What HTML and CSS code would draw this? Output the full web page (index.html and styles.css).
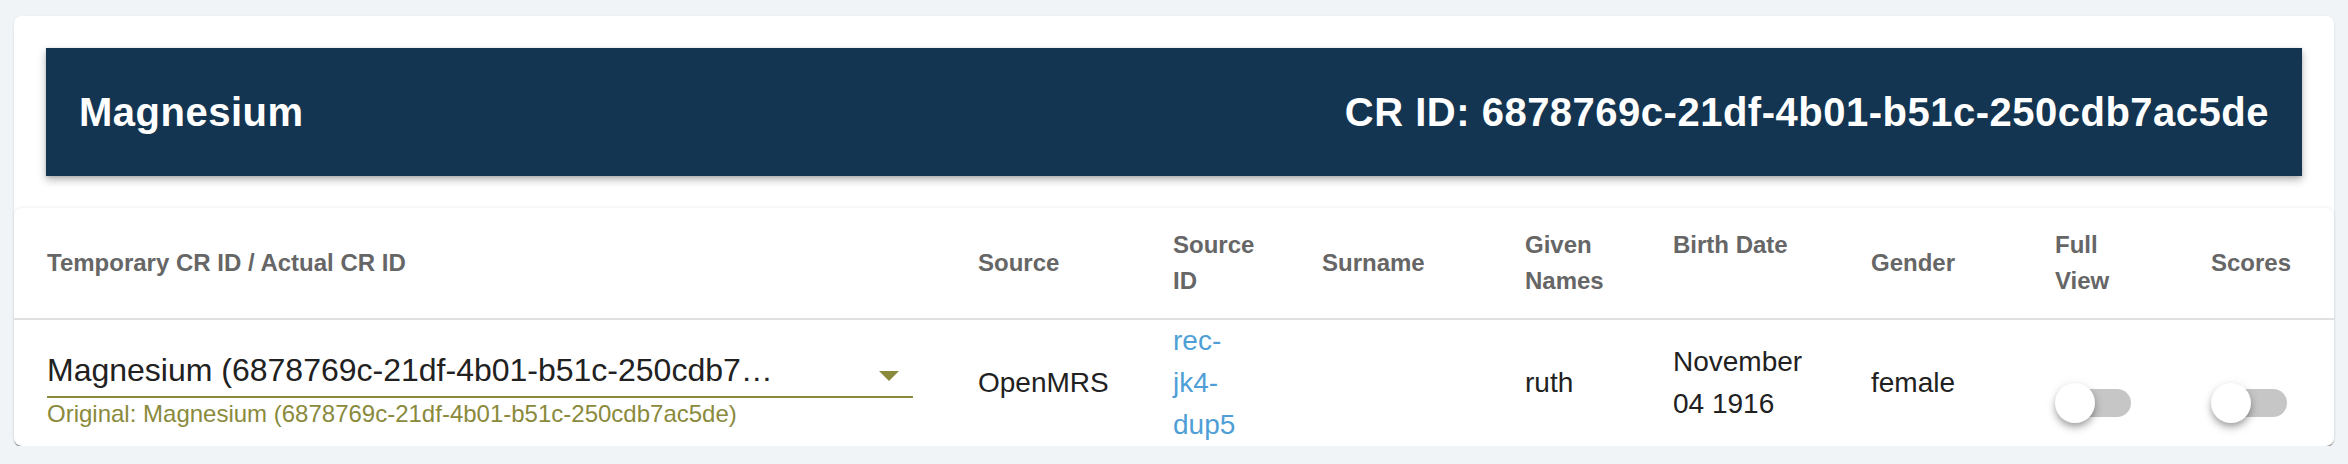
FILE: index.html
```html
<!DOCTYPE html>
<html lang="en">
<head>
<meta charset="utf-8">
<title>Magnesium</title>
<link rel="stylesheet" href="styles.css">
</head>
<body>
<div class="card">
  <div class="titlebar">
    <span class="title">Magnesium</span>
    <span class="title">CR ID: 6878769c-21df-4b01-b51c-250cdb7ac5de</span>
  </div>
  <div class="table">
    <div class="row head">
      <div class="cell">Temporary CR ID / Actual CR ID</div>
      <div class="cell">Source</div>
      <div class="cell">Source ID</div>
      <div class="cell">Surname</div>
      <div class="cell">Given Names</div>
      <div class="cell"><div>Birth Date<span class="sort-icon"><svg width="24" height="24" viewBox="0 0 24 24"><path d="M13 20h-2V8l-5.5 5.5-1.42-1.42L12 4.16l7.92 7.92-1.42 1.42L13 8v12z" fill="#666"/></svg></span></div></div>
      <div class="cell">Gender</div>
      <div class="cell">Full View</div>
      <div class="cell">Scores</div>
    </div>
    <div class="row body">
      <div class="cell">
        <div class="select">
          <div class="select-row">
            <span class="select-value">Magnesium (6878769c-21df-4b01-b51c-250cdb7ac5de)</span>
            <svg class="arrow" width="20" height="10" viewBox="0 0 20 10"><path d="M0 0h20L10 10z" fill="#8a8a3c"/></svg>
          </div>
          <div class="hint">Original: Magnesium (6878769c-21df-4b01-b51c-250cdb7ac5de)</div>
        </div>
      </div>
      <div class="cell">OpenMRS</div>
      <div class="cell link">rec-jk4-dup5</div>
      <div class="cell"></div>
      <div class="cell">ruth</div>
      <div class="cell">November 04 1916</div>
      <div class="cell">female</div>
      <div class="cell"><div class="switch"><span class="track"></span><span class="thumb"></span></div></div>
      <div class="cell"><div class="switch"><span class="track"></span><span class="thumb"></span></div></div>
    </div>
  </div>
</div>
</body>
</html>
```

FILE: styles.css
```css
html, body {
  margin: 0;
  padding: 0;
}
body {
  background: #f0f4f7;
  font-family: "Liberation Sans", Arial, Helvetica, sans-serif;
  padding: 16px 14px 0 14px;
}
.card {
  background: #fff;
  border-radius: 8px;
  box-shadow: 0 1px 3px rgba(0, 0, 0, 0.10);
  padding-top: 32px;
}
.titlebar {
  margin: 0 32px 32px 32px;
  height: 128px;
  padding: 0 33px;
  background: #133551;
  display: flex;
  align-items: center;
  justify-content: space-between;
  box-shadow: 0 4px 8px rgba(0, 0, 0, 0.28), 0 1px 3px rgba(0, 0, 0, 0.12);
}
.title {
  color: #fff;
  font-size: 40px;
  font-weight: bold;
  letter-spacing: 0.5px;
}
.table {
  background: #fff;
  border-radius: 8px;
  box-shadow: 0 2px 1px -1px rgba(0, 0, 0, 0.55), 0 1px 1px rgba(0, 0, 0, 0.14), 0 -1px 3px rgba(0, 0, 0, 0.06);
}
.row {
  display: grid;
  grid-template-columns: 932px 195px 149px 203px 148px 198px 184px 156px 155px;
}
.head {
  height: 110px;
  border-bottom: 2px solid #e0e0e0;
}
.body {
  height: 126px;
}
.cell {
  display: flex;
  align-items: center;
  padding: 0 32px;
  min-width: 0;
}
.row .cell:first-child {
  padding-left: 33px;
}
.head .cell {
  font-size: 24px;
  line-height: 36px;
  font-weight: bold;
  color: #666;
}
.sort-icon {
  display: block;
  height: 36px;
  visibility: hidden;
}
.body .cell {
  font-size: 28px;
  line-height: 42px;
  color: #212121;
}
.body .link {
  color: #4f9fd6;
}
.select {
  width: 866px;
  padding-top: 10px;
}
.select-row {
  display: flex;
  align-items: center;
  justify-content: space-between;
  border-bottom: 2px solid #8a8a3c;
  padding-bottom: 6px;
}
.select-value {
  display: block;
  max-width: 734px;
  font-size: 32px;
  line-height: 40px;
  color: #212121;
  white-space: nowrap;
  overflow: hidden;
  text-overflow: ellipsis;
}
.arrow {
  display: block;
  margin: 12px 14px 0 0;
}
.hint {
  margin-top: 4px;
  font-size: 24px;
  line-height: 24px;
  color: #8a8a3c;
  white-space: nowrap;
}
.switch {
  position: relative;
  width: 76px;
  height: 40px;
  margin-top: 40px;
}
.track {
  position: absolute;
  left: 4px;
  top: 6px;
  width: 72px;
  height: 28px;
  border-radius: 14px;
  background: #c6c6c6;
}
.thumb {
  position: absolute;
  left: 0;
  top: 0;
  width: 40px;
  height: 40px;
  border-radius: 50%;
  background: #fff;
  box-shadow: 0 4px 6px -1px rgba(0, 0, 0, 0.25), 0 6px 10px rgba(0, 0, 0, 0.12), 0 1px 12px rgba(0, 0, 0, 0.08);
}
```
